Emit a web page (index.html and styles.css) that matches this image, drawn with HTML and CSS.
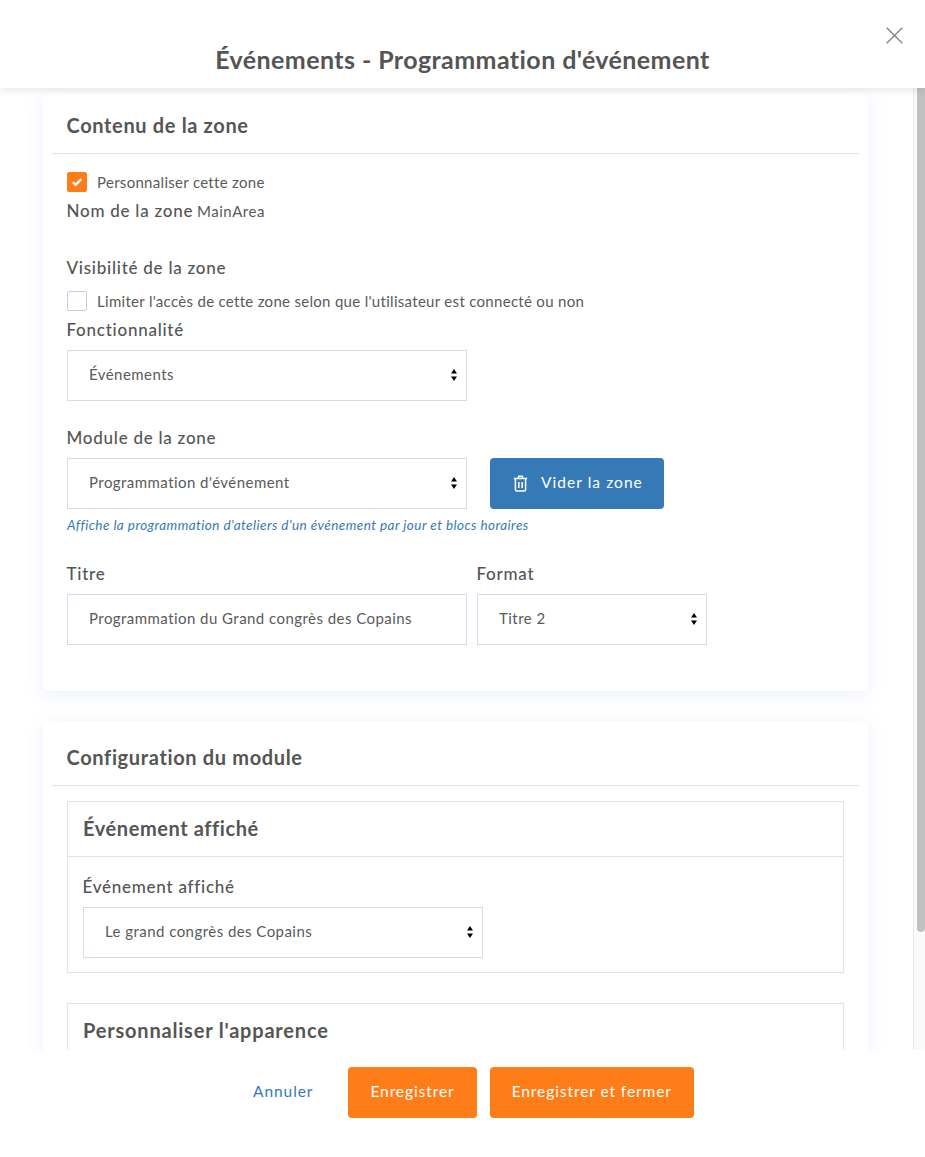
FILE: index.html
```html
<!DOCTYPE html>
<html lang="fr">
<head>
<meta charset="utf-8">
<title>Événements - Programmation d'événement</title>
<link rel="stylesheet" href="styles.css">
</head>
<body>
<div class="modal">
  <header class="modal-head">
    <h1>Événements - Programmation d'événement</h1>
    <button class="close" aria-label="Fermer">
      <svg width="17" height="17" viewBox="0 0 17 17"><path d="M.7.7l15.6 15.6M16.3.7L.7 16.3" fill="none" stroke="#7f7f7f" stroke-width="1.3"/></svg>
    </button>
  </header>
  <div class="modal-mid">
    <main class="content">
      <section class="card first">
        <h2 class="card-title">Contenu de la zone</h2>
        <div class="card-body">
          <label class="check-row">
            <span class="box on"><svg width="12" height="10" viewBox="0 0 12 10"><path d="M1.8 5.2l2.8 2.6 5.6-5.6" fill="none" stroke="#fff" stroke-width="2.4"/></svg></span>
            Personnaliser cette zone
          </label>
          <div class="name-row"><span class="label">Nom de la zone</span> <span class="value">MainArea</span></div>
          <div class="label vis">Visibilité de la zone</div>
          <label class="check-row second">
            <span class="box"></span>
            Limiter l'accès de cette zone selon que l'utilisateur est connecté ou non
          </label>
          <div class="label func">Fonctionnalité</div>
          <div class="select w400"><select><option>Événements</option></select><svg class="arrows" width="8" height="14" viewBox="0 0 8 14"><path d="M4 1L7 5.5H1zM4 13L1 8.5h6z"/></svg></div>
          <div class="label mod">Module de la zone</div>
          <div class="module-row">
            <div class="select w400"><select><option>Programmation d'événement</option></select><svg class="arrows" width="8" height="14" viewBox="0 0 8 14"><path d="M4 1L7 5.5H1zM4 13L1 8.5h6z"/></svg></div>
            <button class="btn blue">
              <svg class="trash" width="15" height="17" viewBox="0 0 15 17" fill="none" stroke="#fff" stroke-width="1.5"><path d="M.8 3.6h13.4M5 3.4l.8-2.2h3.4l.8 2.2M2.4 3.8v10.6c0 1 .6 1.6 1.6 1.6h7c1 0 1.6-.6 1.6-1.6V3.8M5.8 7v6M9.2 7v6"/></svg>
              <span class="btn-text">Vider la zone</span>
            </button>
          </div>
          <p class="help">Affiche la programmation d'ateliers d'un événement par jour et blocs horaires</p>
          <div class="title-row">
            <div class="field">
              <div class="label">Titre</div>
              <input class="input" type="text" value="Programmation du Grand congrès des Copains">
            </div>
            <div class="field">
              <div class="label">Format</div>
              <div class="select w230"><select><option>Titre 2</option></select><svg class="arrows" width="8" height="14" viewBox="0 0 8 14"><path d="M4 1L7 5.5H1zM4 13L1 8.5h6z"/></svg></div>
            </div>
          </div>
        </div>
      </section>
      <section class="card">
        <h2 class="card-title alt">Configuration du module</h2>
        <div class="card-body panels">
          <div class="panel">
            <h3 class="panel-title">Événement affiché</h3>
            <div class="panel-body">
              <div class="label">Événement affiché</div>
              <div class="select w400"><select><option>Le grand congrès des Copains</option></select><svg class="arrows" width="8" height="14" viewBox="0 0 8 14"><path d="M4 1L7 5.5H1zM4 13L1 8.5h6z"/></svg></div>
            </div>
          </div>
          <div class="panel">
            <h3 class="panel-title wide">Personnaliser l'apparence</h3>
          </div>
        </div>
      </section>
    </main>
    <div class="scrollbar"><div class="thumb"></div></div>
  </div>
  <footer class="modal-foot">
    <button class="btn link">Annuler</button>
    <button class="btn orange">Enregistrer</button>
    <button class="btn orange">Enregistrer et fermer</button>
  </footer>
</div>
</body>
</html>
```
FILE: styles.css
```css
* { box-sizing: border-box; }
html, body { margin: 0; height: 100%; }
body {
  font-family: "Lato", "Open Sans", sans-serif;
  font-size: 15px;
  color: #5a5a5a;
  background: #fff;
  overflow: hidden;
}
.modal { display: flex; flex-direction: column; height: 1157px; }
.modal-head {
  position: relative;
  z-index: 2;
  flex: 0 0 88px;
  background: #fff;
  box-shadow: 0 2px 8px rgba(0,0,0,.1);
  text-align: center;
}
.modal-head h1 {
  margin: 0;
  padding-top: 44px;
  font-size: 25px;
  line-height: 30px;
  font-weight: 700;
  color: #555;
  letter-spacing: .42px;
}
.close {
  position: absolute;
  top: 27px;
  left: 886px;
  width: 17px;
  height: 17px;
  padding: 0;
  border: 0;
  background: none;
  display: block;
}
.close svg { display: block; }
.modal-mid { flex: 0 0 962px; display: flex; overflow: hidden; }
.content { flex: 1; min-width: 0; padding: 5px 45px 0 43px; }
.scrollbar { flex: 0 0 12px; background: #fafafa; border-left: 1px solid #e8e8e8; }
.thumb { height: 844px; margin-left: 3px; background: #c1c1c1; border-radius: 0 0 4px 4px; }
.card {
  background: #fff;
  border-radius: 6px;
  padding: 0 9px;
  box-shadow: 0 4px 18px rgba(70,100,240,.09);
  margin-bottom: 30px;
}
.card.first { height: 598px; }
.card-title {
  margin: 0;
  height: 61px;
  padding: 20px 14.5px 0;
  font-size: 20px;
  line-height: 24px;
  font-weight: 700;
  color: #555;
  letter-spacing: .65px;
  border-bottom: 1px solid #e3e3e3;
}
.card-title.alt { height: 65px; padding-top: 24px; }
.card-body { padding: 17px 15px 0; }
.label { font-size: 17px; line-height: 22px; font-weight: 500; color: #555; letter-spacing: .75px; margin-left: -.5px; }
.check-row { display: flex; align-items: center; gap: 10px; height: 21px; font-size: 15px; letter-spacing: .3px; }
.box { width: 20px; height: 20px; border: 1px solid #c4cfe0; border-radius: 2px; display: flex; align-items: center; justify-content: center; flex: none; }
.box.on { background: #ff7d19; border-color: #ff7d19; }
.name-row { margin-top: 8px; line-height: 22px; }
.name-row .label { display: inline; }
.value { font-size: 15px; letter-spacing: .5px; }
.vis { margin-top: 35px; }
.check-row.second { margin-top: 11px; }
.func { margin-top: 8px; margin-bottom: 9px; }
.mod { margin-top: 26px; margin-bottom: 9px; }
.select { position: relative; height: 51px; }
.w400 { width: 400px; flex: none; }
.w230 { width: 230px; }
.select select, .input {
  display: block;
  width: 100%;
  height: 51px;
  padding: 0 21px 3px;
  border: 1px solid #d3dce9;
  border-radius: 0;
  background: #fff;
  color: #5a5a5a;
  font: inherit;
  font-size: 15px;
  letter-spacing: .45px;
  appearance: none;
  outline: 0;
}
.arrows { position: absolute; right: 9px; top: 18px; fill: #000; pointer-events: none; }
.module-row { display: flex; gap: 23px; }
.btn {
  height: 51px;
  border: 0;
  border-radius: 4px;
  font: inherit;
  font-size: 15.5px;
  letter-spacing: .92px;
  padding: 0 22px 3px;
  color: #fff;
}
.blue { width: 174px; background: #357ab7; display: flex; align-items: center; gap: 13px; padding: 0 0 0 23px; white-space: nowrap; }
.trash { flex: none; }
.btn-text { padding-bottom: 3px; letter-spacing: 1.05px; }
.help { margin: 7px 0 0; font-size: 13.5px; line-height: 18px; font-style: italic; color: #357ab7; letter-spacing: .44px; }
.title-row { display: flex; gap: 10px; margin-top: 29px; }
.title-row .label { margin-bottom: 9px; }
.input { width: 400px; }
.panels { padding-top: 15px; }
.panel { border: 1px solid #e3e3e3; margin-bottom: 30px; }
.panel-title {
  margin: 0;
  height: 55px;
  padding: 14px 15px 0;
  font-size: 20px;
  line-height: 24px;
  font-weight: 700;
  color: #555;
  letter-spacing: .58px;
  border-bottom: 1px solid #e3e3e3;
}
.panel-title.wide { letter-spacing: .8px; }
.panel-body { padding: 19px 15px 14px; }
.panel-body .label { margin-bottom: 9px; }
.modal-foot { flex: 1; display: flex; justify-content: center; gap: 13px; padding-top: 17px; background: #fff; align-items: flex-start; }
.link { background: none; color: #357ab7; }
.orange { background: #ff7d19; }
```
